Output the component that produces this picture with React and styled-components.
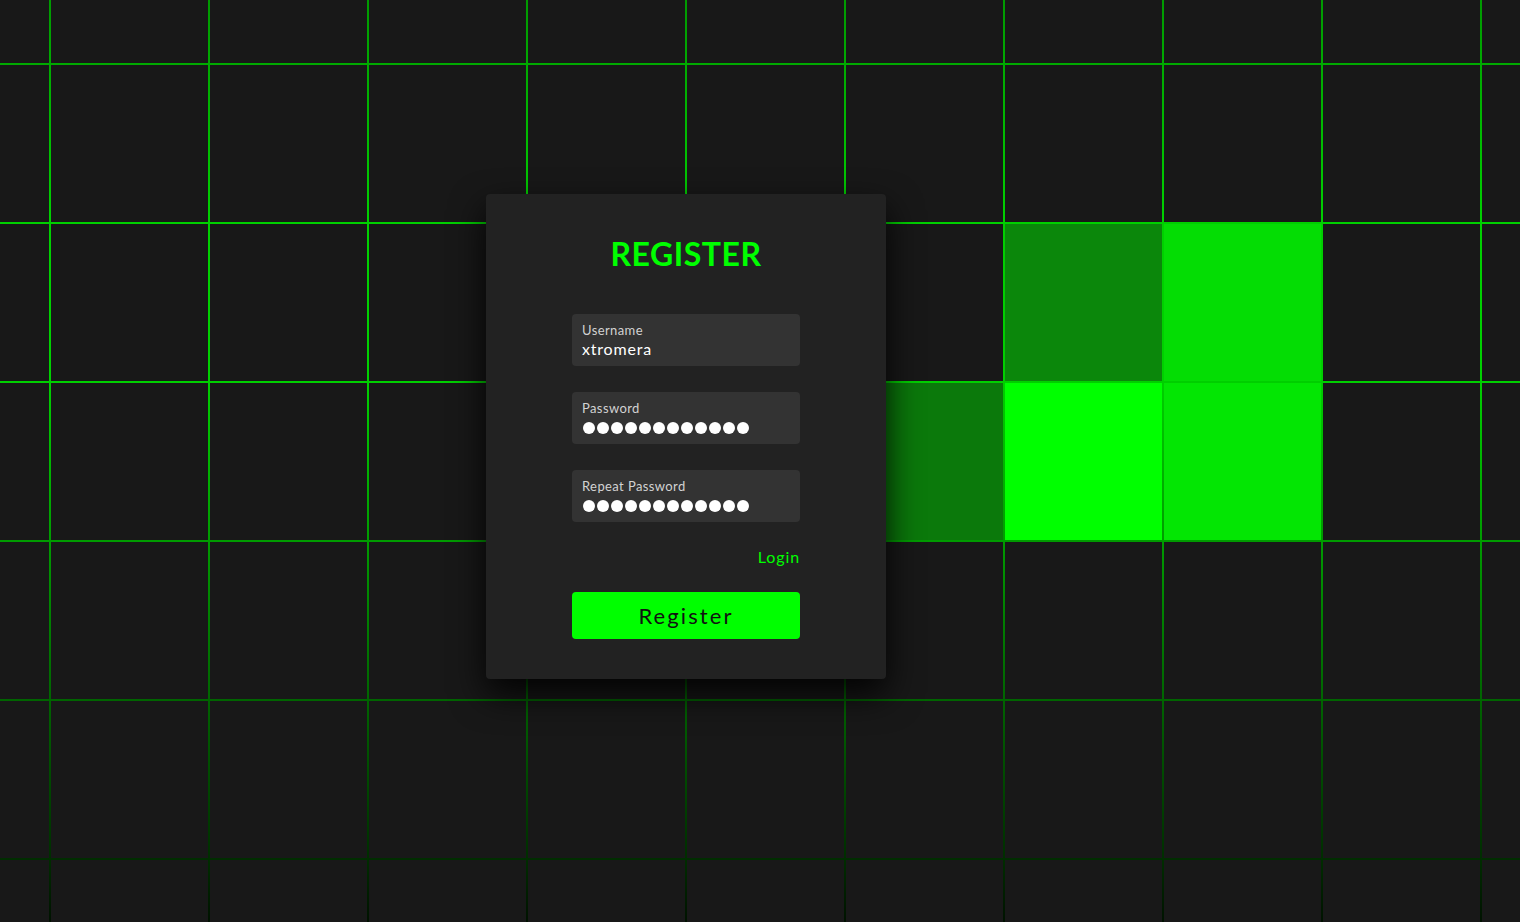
import React from "react"
import styled, { createGlobalStyle } from "styled-components"

const GlobalStyle = createGlobalStyle`
  * { box-sizing: border-box; }
  body {
    margin: 0;
    background: #181818;
    font-family: "Lato", "Noto Sans", sans-serif;
    overflow: hidden;
  }
`

const Page = styled.section`
  position: relative;
  width: 100vw;
  height: 100vh;
  overflow: hidden;
  background: linear-gradient(
    to bottom,
    #009a00 0%,
    #00d000 24%,
    #00d000 41%,
    #009a00 59%,
    #006400 76%,
    #002e00 93%,
    #001200 100%
  );
`

const Grid = styled.div`
  display: grid;
  grid-template-columns: repeat(11, 157px);
  grid-auto-rows: 157px;
  gap: 2px;
  margin: -94px 0 0 -108px;
`

const Cell = styled.span`
  display: block;
  background: ${p => p.$lit || "#181818"};
`

const Card = styled.div`
  position: absolute;
  left: 486px;
  top: 194px;
  width: 400px;
  padding: 40px 86px;
  background: #222;
  border-radius: 4px;
  box-shadow: 0 15px 35px rgba(0, 0, 0, 0.9);
  display: flex;
  flex-direction: column;
  z-index: 2;
`

const Title = styled.h2`
  margin: 0 0 40px;
  font-size: 32px;
  line-height: 40px;
  font-weight: 700;
  color: #0f0;
  text-align: center;
  letter-spacing: 0.5px;
`

const Form = styled.div`
  display: flex;
  flex-direction: column;
  gap: 26px;
`

const Field = styled.div`
  height: 52px;
  background: #333;
  border-radius: 4px;
  padding: 8px 10px;
  display: flex;
  flex-direction: column;
`

const Label = styled.span`
  font-size: 13px;
  line-height: 16px;
  color: #d2d2d2;
  letter-spacing: 0.4px;
`

const Value = styled.span`
  margin-top: 2px;
  font-size: 16px;
  line-height: 18px;
  color: #fff;
  letter-spacing: 0.8px;
`

const Dots = styled.div`
  margin-top: 6px;
  display: flex;
  gap: 2px;
  padding-left: 1px;
`

const Dot = styled.i`
  width: 12px;
  height: 12px;
  border-radius: 50%;
  background: #fff;
`

const Links = styled.div`
  display: flex;
  justify-content: flex-end;
  margin-top: -1px;
`

const LinkText = styled.a`
  font-size: 16px;
  line-height: 20px;
  color: #0f0;
  text-decoration: none;
  letter-spacing: 0.9px;
`

const Button = styled.button`
  margin-top: -1px;
  height: 47px;
  border: none;
  border-radius: 4px;
  background: #0f0;
  color: #111;
  font-family: inherit;
  font-size: 22px;
  letter-spacing: 2.1px;
  cursor: pointer;
`

const lit = {
  "2-7": "#0b870b",
  "2-8": "#04dd04",
  "3-6": "#0b790b",
  "3-7": "#00ff00",
  "3-8": "#03e603",
}

function PasswordField({ label }) {
  return (
    <Field>
      <Label>{label}</Label>
      <Dots>
        {Array.from({ length: 12 }).map((_, i) => (
          <Dot key={i} />
        ))}
      </Dots>
    </Field>
  )
}

export default function App() {
  const cells = []
  for (let r = 0; r < 8; r++) {
    for (let c = 0; c < 11; c++) {
      cells.push(<Cell key={`${r}-${c}`} $lit={lit[`${r}-${c}`]} />)
    }
  }

  return (
    <>
      <GlobalStyle />
      <Page>
        <Grid>{cells}</Grid>
        <Card>
          <Title>REGISTER</Title>
          <Form>
            <Field>
              <Label>Username</Label>
              <Value>xtromera</Value>
            </Field>
            <PasswordField label="Password" />
            <PasswordField label="Repeat Password" />
            <Links>
              <LinkText href="#">Login</LinkText>
            </Links>
            <Button>Register</Button>
          </Form>
        </Card>
      </Page>
    </>
  )
}
